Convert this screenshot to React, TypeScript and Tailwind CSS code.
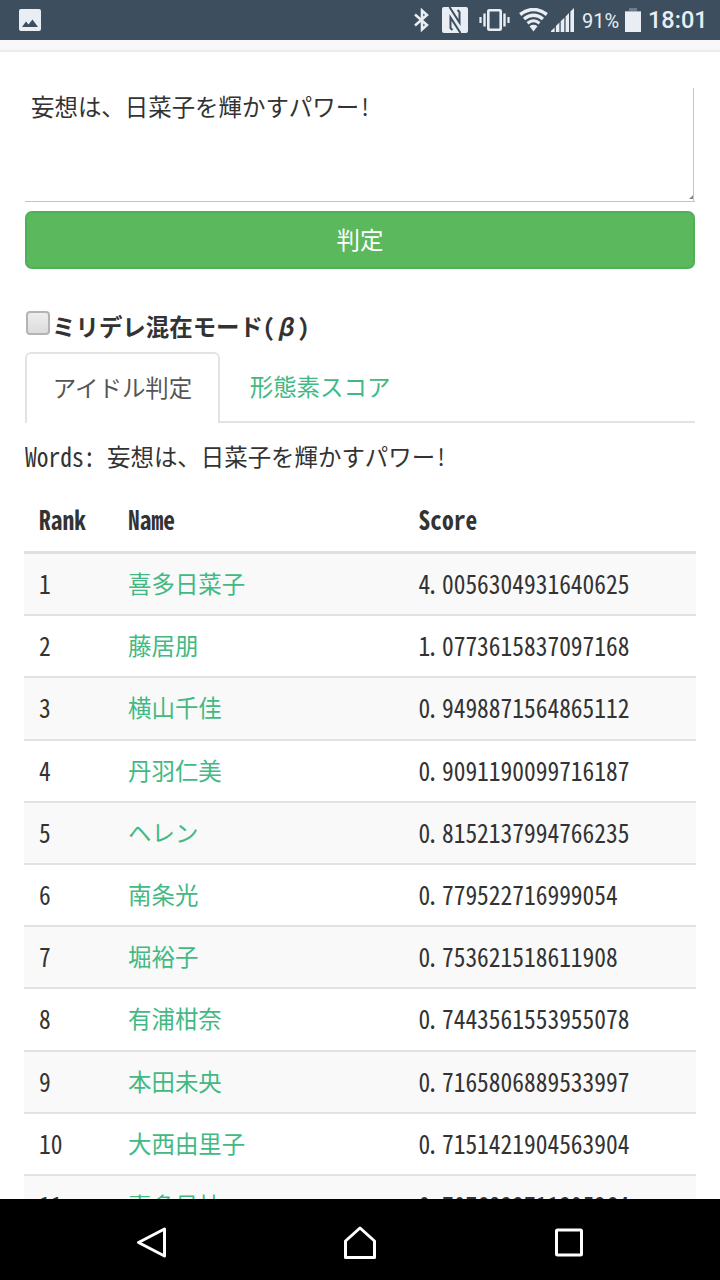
import { ReactNode } from 'react';
import clsx from 'clsx';

interface Idol {
  rank: number;
  name: string;
  score: string;
}

const words = '妄想は、日菜子を輝かすパワー!';

const idols: Idol[] = [
  { rank: 1, name: '喜多日菜子', score: '4.0056304931640625' },
  { rank: 2, name: '藤居朋', score: '1.0773615837097168' },
  { rank: 3, name: '横山千佳', score: '0.9498871564865112' },
  { rank: 4, name: '丹羽仁美', score: '0.9091190099716187' },
  { rank: 5, name: 'ヘレン', score: '0.8152137994766235' },
  { rank: 6, name: '南条光', score: '0.779522716999054' },
  { rank: 7, name: '堀裕子', score: '0.753621518611908' },
  { rank: 8, name: '有浦柑奈', score: '0.7443561553955078' },
  { rank: 9, name: '本田未央', score: '0.7165806889533997' },
  { rank: 10, name: '大西由里子', score: '0.7151421904563904' },
  { rank: 11, name: '喜多見柚', score: '0.7076833711395264' },
];

function StatusBar() {
  return (
    <div className="flex h-10 shrink-0 items-center bg-[#3d4f5e] pr-[14px] pl-[19px] font-['Roboto',sans-serif] text-[#e9eef5]">
      <svg width="22" height="22" viewBox="0 0 22 22">
        <rect width="22" height="22" rx="2" fill="#e9eef5" />
        <path d="M3 18 L7 12.5 L9.5 15.5 L13.5 10.5 L19 18 Z" fill="#3d4f5e" />
      </svg>
      <div className="ml-auto flex items-center">
        {/* bluetooth */}
        <svg width="16" height="24" viewBox="0 0 16 24" fill="none" stroke="#e9eef5" strokeWidth="2.5">
          <path d="M1 6.5 L13 17 L8 21.5 V2.5 L13 7 L1 17.5" />
        </svg>
        {/* nfc */}
        <svg className="ml-[12px]" width="26" height="26" viewBox="0 0 26 26">
          <rect width="26" height="26" rx="2" fill="#e9eef5" />
          <path
            d="M7.5 0 L17.5 15.5 V5 L15.5 3 M18.5 26 L8.5 10.5 V21 L10.5 23"
            fill="none"
            stroke="#3d4f5e"
            strokeWidth="2"
          />
        </svg>
        {/* vibrate */}
        <svg className="ml-[11px]" width="31" height="24" viewBox="0 0 31 24" fill="none" stroke="#e9eef5">
          <rect x="9.3" y="2.3" width="12.4" height="19.4" rx="1" strokeWidth="2.6" />
          <path d="M5.5 5.5 V18.5 M25.5 5.5 V18.5" strokeWidth="2.4" />
          <path d="M1.5 9 V15 M29.5 9 V15" strokeWidth="2.2" />
        </svg>
        {/* wifi */}
        <svg className="ml-[9px]" width="29" height="24" viewBox="0 0 29 24" fill="none" stroke="#e9eef5">
          <path d="M1.2 6.5 Q14.5 -3.5 27.8 6.5" strokeWidth="3.5" />
          <path d="M5 11 Q14.5 3.5 24 11" strokeWidth="3.3" />
          <path d="M8.5 15.2 Q14.5 10.3 20.5 15.2" strokeWidth="3.1" />
          <path d="M10.5 18.2 Q14.5 15.5 18.5 18.2 L14.5 23.5 Z" fill="#e9eef5" stroke="none" />
        </svg>
        <svg className="ml-[3px]" width="24" height="24" viewBox="0 0 24 24" fill="#e9eef5">
          <path d="M0 24 V23 L3.6 19.4 V24 Z M4.9 24 V18.1 L8.4 14.6 V24 Z M9.7 24 V13.3 L13.3 9.7 V24 Z M14.6 24 V8.4 L18 5 V24 Z M19.4 24 V3.6 L23 0 V24 Z" />
        </svg>
        <span className="ml-[7px] w-[38px] pt-px text-[20px] leading-none whitespace-nowrap">91%</span>
        <svg className="ml-[5px]" width="16" height="24" viewBox="0 0 16 24">
          <path d="M4 0 H12 V3 H16 V5 H0 V3 H4 Z" fill="#6e7d89" />
          <rect y="3.5" width="16" height="20.5" fill="#e9eef5" />
        </svg>
        <span className="ml-[7px] w-[58px] pt-[2px] text-[23.5px] leading-none font-medium whitespace-nowrap">
          18:01
        </span>
      </div>
    </div>
  );
}

function Tab({ active = false, children }: { active?: boolean; children: ReactNode }) {
  return (
    <button
      className={clsx(
        'flex h-[71px] items-center justify-center',
        active
          ? 'w-[195px] rounded-t-[6px] border-2 border-b-0 border-[#e3e3e3] bg-white pb-[4px] text-[#555]'
          : 'w-[200px] pb-[3px] text-[#42b983]'
      )}
    >
      {children}
    </button>
  );
}

// Half-width latin glyphs are drawn tall and narrow next to the kana
function Latin({ children }: { children: ReactNode }) {
  return <span className="inline-block origin-[50%_60%] scale-y-[1.13]">{children}</span>;
}

function ScoreText({ value }: { value: string }) {
  const [whole, decimals] = value.split('.');
  return (
    <Latin>
      {whole}
      <span className="inline-block w-[0.5em] -indent-[3.5px]">.</span>
      {decimals}
    </Latin>
  );
}

function ResultTable() {
  return (
    <div className="-mx-px mt-[15px]">
      <div className="grid h-[66px] grid-cols-[89px_290.5px_1fr] items-center border-b-3 border-[#e0e0e0] pb-[2px] pl-[15px] font-bold">
        <Latin>Rank</Latin>
        <Latin>Name</Latin>
        <Latin>Score</Latin>
      </div>
      {idols.map((idol) => (
        <div
          key={idol.rank}
          className="grid h-[62.2px] grid-cols-[89px_290.5px_1fr] items-center border-b-2 border-[#e2e2e2] pb-[2px] pl-[15px] odd:bg-white even:bg-[#f9f9f9]"
        >
          <Latin>{idol.rank}</Latin>
          <a className="text-[#42b983]">{idol.name}</a>
          <ScoreText value={idol.score} />
        </div>
      ))}
    </div>
  );
}

function NavigationBar() {
  return (
    <div className="flex h-[81px] shrink-0 items-center justify-between bg-black pt-[7px] pr-[136px] pl-[136px]">
      <svg width="30" height="34" viewBox="0 0 30 34" fill="none" stroke="#fff" strokeWidth="3" strokeLinejoin="round">
        <path d="M28.5 3 V30 L2.5 16.5 Z" />
      </svg>
      <svg width="34" height="34" viewBox="0 0 34 34" fill="none" stroke="#fff" strokeWidth="3">
        <path d="M2.5 31.5 V15 L17 2 L31.5 15 V31.5 Z" strokeLinejoin="round" />
      </svg>
      <svg width="30" height="30" viewBox="0 0 30 30" fill="none" stroke="#fff" strokeWidth="3">
        <rect x="2.5" y="2" width="25" height="25" rx="1" />
      </svg>
    </div>
  );
}

export default function App() {
  return (
    <div className="flex h-[1280px] w-[720px] flex-col overflow-hidden bg-white font-['Noto_Sans_CJK_JP',sans-serif] text-[23.45px] leading-[34px] text-[#333] [font-feature-settings:'hwid']">
      <StatusBar />
      <div className="h-3 shrink-0 border-b-2 border-[#ebebeb] bg-[#f8f8f8]" />
      <main className="flex min-h-0 flex-1 flex-col overflow-hidden px-[25px] pt-9">
        <div className="h-[114px] shrink-0 border-b border-[#c4c4c4]">
          <div className="mr-px flex h-[113px] items-end justify-between border-r border-[#c4c4c4] pl-[6px]">
            <p className="self-start pt-px">{words}</p>
            <svg width="4" height="4" viewBox="0 0 4 4" className="mb-[2px]">
              <path d="M4 0 V4 H0 Z" fill="#888" />
            </svg>
          </div>
        </div>
        <button className="mt-[9px] h-[58px] shrink-0 rounded-[7px] border-2 border-[#4fb05a] bg-[#5cb85c] pb-[2px] text-white">
          判定
        </button>
        <label className="mt-[40px] flex h-[34px] shrink-0 items-center pl-[1px] font-bold">
          <span className="mr-[2px] mb-[7px] size-6 rounded-[4px] border-2 border-[#b4b4b4] bg-linear-to-b from-[#eee] to-[#dcdcdc]" />
          <span>
            ミリデレ混在モード(<span className="inline-block w-[1.06em] -skew-x-12 text-center">β</span>
            <span className="inline-block -translate-x-[2px]">)</span>
          </span>
        </label>
        <div className="mt-[9px] flex h-[71px] shrink-0 items-end">
          <Tab active>アイドル判定</Tab>
          <div className="flex h-[71px] flex-1 border-b-2 border-[#e3e3e3]">
            <Tab>形態素スコア</Tab>
          </div>
        </div>
        <p className="mt-[16px] shrink-0">
          <Latin>Words:</Latin> {words}
        </p>
        <ResultTable />
      </main>
      <NavigationBar />
    </div>
  );
}
